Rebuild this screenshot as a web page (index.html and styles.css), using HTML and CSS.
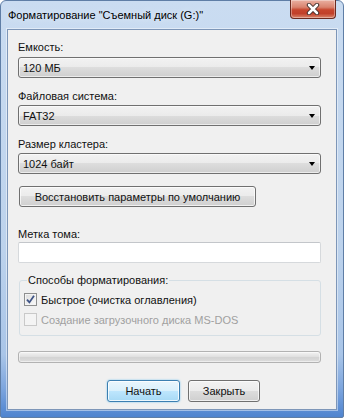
FILE: index.html
```html
<!DOCTYPE html>
<html lang="ru">
<head>
    <meta charset="UTF-8">
    <title>Форматирование</title>
    <link rel="stylesheet" href="styles.css">
</head>
<body>

<div class="window">
    <div class="window__title">
        <span class="window__caption">Форматирование "Съемный диск (G:)"</span>
        <button class="window__close" title="Закрыть">
            <svg width="14" height="12" viewBox="0 0 14 12">
                <path d="M3 2 L11 10 M11 2 L3 10" stroke="#3b2a28" stroke-width="4.4" stroke-linecap="round"/>
                <path d="M3 2 L11 10 M11 2 L3 10" stroke="#fff" stroke-width="2.6" stroke-linecap="round"/>
            </svg>
        </button>
    </div>

    <div class="dialog">
        <div class="label label--first">Емкость:</div>
        <div class="combo"><span>120 МБ</span><i class="combo__arrow"></i></div>

        <div class="label">Файловая система:</div>
        <div class="combo"><span>FAT32</span><i class="combo__arrow"></i></div>

        <div class="label">Размер кластера:</div>
        <div class="combo"><span>1024 байт</span><i class="combo__arrow"></i></div>

        <button class="btn btn--restore">Восстановить параметры по умолчанию</button>

        <div class="label label--volume">Метка тома:</div>
        <div class="textbox"></div>

        <fieldset class="group">
            <legend>Способы форматирования:</legend>
            <div class="check">
                <span class="check__box check__box--on">
                    <svg width="9" height="9" viewBox="0 0 9 9"><path d="M1 4.6 L3.4 7.4 L8 0.8" fill="none" stroke="#3f5486" stroke-width="1.8"/></svg>
                </span>
                <span>Быстрое (очистка оглавления)</span>
            </div>
            <div class="check check--disabled">
                <span class="check__box"></span>
                <span>Создание загрузочного диска MS-DOS</span>
            </div>
        </fieldset>

        <div class="progress"></div>

        <div class="actions">
            <button class="btn btn--default">Начать</button>
            <button class="btn">Закрыть</button>
        </div>
    </div>
</div>

</body>
</html>
```

FILE: styles.css
```css
*{
    box-sizing: border-box;
    margin:0;
    padding:0;
}
body{
    font-family: "Liberation Sans", Arial, sans-serif;
    font-size:11px;
    color:#111;
    background:#fff;
}
.window{
    width:344px;
    height:418px;
    border:1px solid #5f7ea6;
    border-radius:6px 6px 2px 2px;
    background: linear-gradient(to bottom, #cadcf1 0%, #bcd2ec 60%, #a9c5e8 85%, #7ea6de 93%, #4f84cf 100%);
    padding:0 6px;
}
.window__title{
    height:28px;
    display:flex;
    align-items:flex-start;
    justify-content:space-between;
}
.window__caption{
    margin-top:6px;
    padding-left:1px;
    line-height:16px;
    font-size:11px;
    color:#000;
    text-shadow:0 0 6px #e6f0fb;
}
.window__close{
    width:46px;
    height:19px;
    margin-top:-1px;
    margin-right:1px;
    border:1px solid #6b2a20;
    border-top:none;
    border-radius:0 0 4px 4px;
    background: linear-gradient(to bottom, #eab0a2 0%, #d9836f 40%, #c6452d 55%, #c1402a 75%, #d9856b 100%);
    box-shadow: inset 0 0 0 1px rgba(255,255,255,.35);
    display:flex;
    align-items:center;
    justify-content:center;
}
.dialog{
    height:381px;
    border:1px solid #7d96b8;
    box-shadow:0 0 0 1px rgba(255,255,255,.45);
    background:#f0f0f0;
    padding:0 15px 0 10px;
}
.label{
    line-height:15px;
    margin-top:11px;
    margin-bottom:1px;
}
.label--first{
    margin-top:10px;
    margin-bottom:2px;
}
.label--volume{
    margin-top:20px;
    margin-bottom:0;
}
.combo{
    height:21px;
    border:1px solid #707070;
    border-radius:3px;
    background: linear-gradient(to bottom, #f2f2f2 0%, #ebebeb 50%, #dddddd 50%, #cfcfcf 100%);
    box-shadow: inset 0 0 0 1px rgba(255,255,255,.6);
    display:flex;
    align-items:center;
    justify-content:space-between;
    padding:0 5px 0 4px;
}
.combo__arrow{
    width:0;
    height:0;
    border-left:3.5px solid transparent;
    border-right:3.5px solid transparent;
    border-top:4px solid #000;
}
.btn{
    font-family:inherit;
    font-size:11px;
    color:#111;
    white-space:nowrap;
    height:22px;
    border:1px solid #707070;
    border-radius:3px;
    background: linear-gradient(to bottom, #f2f2f2 0%, #ebebeb 50%, #dddddd 50%, #cfcfcf 100%);
    box-shadow: inset 0 0 0 1px rgba(255,255,255,.7);
}
.btn--restore{
    display:block;
    width:237px;
    height:21px;
    margin-top:12px;
    margin-left:1px;
}
.btn--default{
    border-color:#3c7fb1;
    background: linear-gradient(to bottom, #eaf6fd 0%, #d9f0fc 50%, #bee6fd 50%, #a7d9f5 100%);
    box-shadow: inset 0 0 0 1px rgba(255,255,255,.8), 0 0 2px #6fc2f0;
}
.textbox{
    height:21px;
    background:#fff;
    border:1px solid #d6d9dc;
    border-top-color:#c3c6ca;
    border-radius:2px;
}
.group{
    margin-top:10px;
    margin-left:1px;
    border:1px solid #d5dfe5;
    border-radius:3px;
    padding:0 4px 6px;
}
.group legend{
    margin-left:3px;
    padding:0 1px;
    line-height:15px;
}
.check{
    height:19px;
    display:flex;
    align-items:center;
    gap:4px;
    margin-top:2px;
}
.check + .check{
    margin-top:1px;
}
.check__box{
    width:13px;
    height:13px;
    border:1px solid #8e8f8f;
    background: linear-gradient(135deg, #dcdcdc 0%, #fbfbfb 100%);
    box-shadow: inset 0 0 0 1px #f4f4f4;
    display:flex;
    align-items:center;
    justify-content:center;
}
.check--disabled{
    color:#a0a0a0;
}
.check--disabled .check__box{
    border-color:#c9c9c9;
    background:#f4f4f4;
    box-shadow:none;
}
.progress{
    height:12px;
    margin-top:15px;
    border:1px solid #b2b2b2;
    border-radius:3px;
    background: linear-gradient(to bottom, #f3f3f3 0%, #e1e1e1 45%, #d4d4d4 55%, #dcdcdc 100%);
    box-shadow: inset 0 0 0 1px rgba(255,255,255,.5);
}
.actions{
    display:flex;
    gap:8px;
    margin-top:17px;
    padding-left:89px;
}
.actions .btn{
    width:72px;
}
.actions .btn--default{
    width:73px;
}
```
